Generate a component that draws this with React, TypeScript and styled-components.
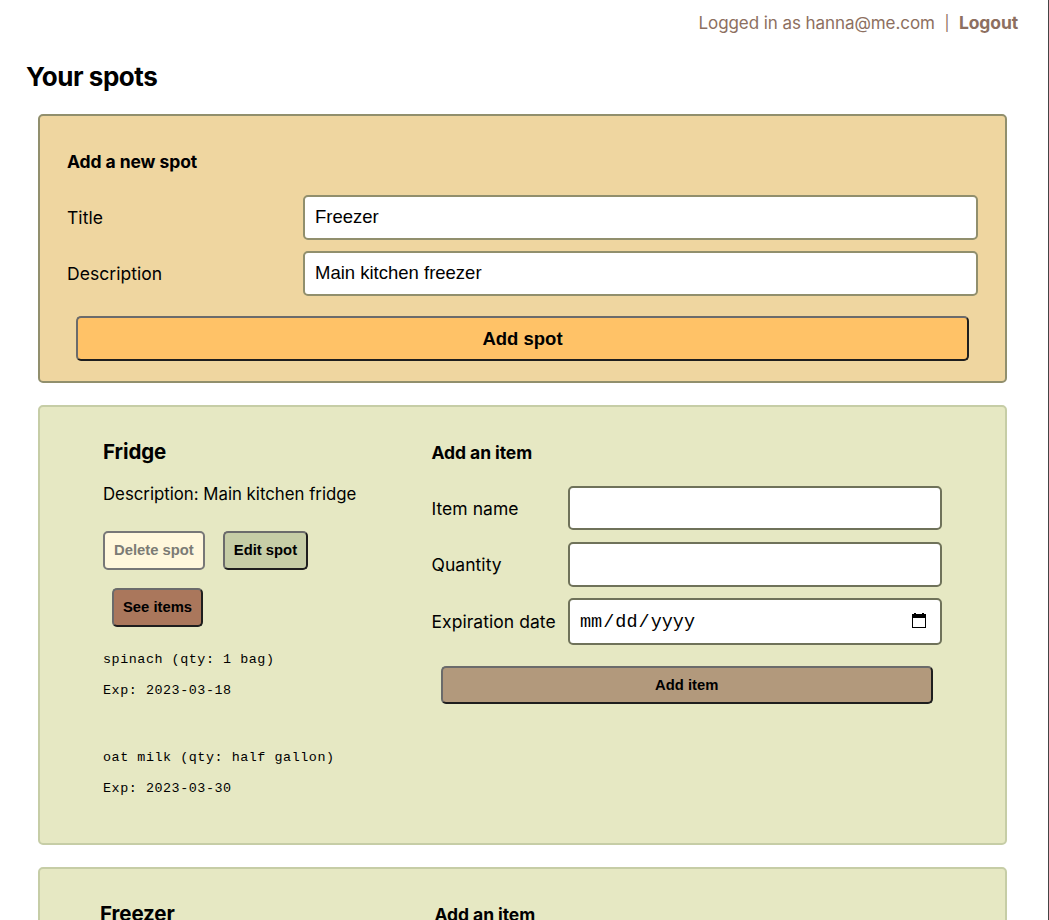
import React from "react";
import styled, { createGlobalStyle } from "styled-components";

const GlobalStyle = createGlobalStyle`
  * { box-sizing: border-box; }
  body {
    margin: 0;
    background: #fff;
    color: #000;
    font-family: Inter, "Liberation Sans", sans-serif;
    font-size: 17.5px;
  }
`;

const Page = styled.div`
  height: 920px;
  overflow: hidden;
  border-right: 1px solid #444;
  padding: 0 41px 0 38px;
`;

const TopBar = styled.header`
  display: flex;
  justify-content: flex-end;
  height: 46px;
  line-height: 46px;
  margin-right: -11px;
  color: #8d6f60;
  white-space: pre;
`;

const Account = styled.span`
  font-size: 17px;
  letter-spacing: -0.07px;
`;

const Divider = styled.span`
  width: 24px;
  text-align: center;
  font-size: 15px;
`;

const Logout = styled.a`
  font-weight: 700;
  letter-spacing: -0.1px;
`;

const PageTitle = styled.h1`
  margin: 0 0 0 -12px;
  height: 68px;
  line-height: 62px;
  font-size: 26px;
  font-weight: 700;
  letter-spacing: -0.45px;
`;

const NewSpotCard = styled.section`
  height: 269px;
  margin-bottom: 22px;
  padding: 31px 27px 0;
  background: #efd6a0;
  border: 2px solid #918f6d;
  border-radius: 5px;
`;

const SpotCard = styled.section<{ $inset: number; $formInset: number }>`
  display: flex;
  justify-content: space-between;
  height: 440px;
  margin-bottom: 22px;
  padding: 30px 63px 0 ${(p) => p.$inset}px;
  background: #e6e8c3;
  border: 2px solid #c6cda6;
  border-radius: 5px;
  --form-inset: ${(p) => p.$formInset}px;
`;

const FormTitle = styled.h3`
  margin: 0;
  height: 48px;
  line-height: 30px;
  font-size: 17.5px;
  font-weight: 700;
  letter-spacing: -0.08px;
`;

const SpotDetails = styled.div`
  width: 290px;
`;

const SpotTitle = styled.h2`
  margin: 0;
  height: 42px;
  line-height: 30px;
  font-size: 20.5px;
  font-weight: 700;
  letter-spacing: -0.1px;
`;

const Description = styled.p`
  margin: 0;
  height: 52px;
  line-height: 30px;
  font-size: 16.8px;
  white-space: nowrap;
`;

const SpotItemForm = styled.div`
  width: 510.5px;

  ${FormTitle} {
    height: 49px;
    line-height: 32px;
    padding-left: var(--form-inset);
  }
`;

const Field = styled.label<{ $labelWidth: number; $height: number; $gap: number }>`
  display: grid;
  grid-template-columns: ${(p) => p.$labelWidth}px 1fr;
  align-items: center;
  height: ${(p) => p.$height}px;
  margin-bottom: ${(p) => p.$gap}px;
  letter-spacing: 0.05px;
  white-space: nowrap;
`;

const TextInput = styled.input<{ $edge: string }>`
  width: 100%;
  height: 100%;
  padding: 0 10px 1px;
  background: #fff;
  border: 2px solid ${(p) => p.$edge};
  border-radius: 5px;
  color: #000;
  font: 18.5px "Liberation Sans", Arial, sans-serif;
  outline: none;
`;

const DateBox = styled.div`
  display: flex;
  align-items: center;
  justify-content: space-between;
  height: 100%;
  padding: 0 13px 0 10px;
  background: #fff;
  border: 2px solid #6f725a;
  border-radius: 5px;
  font: 18.5px "Liberation Mono", monospace;
  letter-spacing: 0;
`;

const DateParts = styled.span`
  display: flex;
  gap: 1px;
  padding-top: 2px;
`;

const Button = styled.button<{ $fill: string }>`
  height: 39px;
  padding: 0 9px 2px;
  background: ${(p) => p.$fill};
  border: 2px solid;
  border-color: #6b6b6b #1e1e1e #1e1e1e #6b6b6b;
  border-radius: 5px;
  color: #000;
  font: bold 14.8px "Liberation Sans", Arial, sans-serif;
  white-space: nowrap;

  &:disabled {
    border-color: #777;
    color: #7b7b75;
  }
`;

const WideButton = styled(Button)<{ $height: number; $size: number }>`
  display: block;
  width: calc(100% - 18px);
  height: ${(p) => p.$height}px;
  margin: 20px 9px 0;
  padding: 0;
  font-size: ${(p) => p.$size}px;
`;

const AddItemButton = styled(WideButton)`
  margin-top: 21px;
`;

const SpotActions = styled.div`
  display: flex;
  flex-wrap: wrap;
  gap: 18px;
  width: 230px;
  margin-bottom: 17px;
`;

const SeeItems = styled(Button)`
  margin-left: 9px;
`;

const Item = styled.div`
  height: 98px;
  font: 13.4px/31px "Liberation Mono", monospace;
  letter-spacing: 0.54px;
  white-space: nowrap;
`;

const ItemLine = styled.div`
  height: 31px;
`;

const CalendarIcon = () => (
  <svg width="16" height="17" viewBox="0 0 16 17">
    <path d="M3 0h2v1h6V0h2v1h2v14H1V1h2zM2 5v9h12V5z" fill="#000" fillRule="evenodd" />
  </svg>
);

type Food = { name: string; qty: string; exp: string };
type SpotProps = {
  title: string;
  description?: string;
  items?: Food[];
  inset?: number;
  formInset?: number;
};

function Spot({ title, description, items = [], inset = 63, formInset = 0 }: SpotProps) {
  return (
    <SpotCard $inset={inset} $formInset={formInset}>
      <SpotDetails>
        <SpotTitle>{title}</SpotTitle>
        {description && (
          <>
            <Description>Description: {description}</Description>
            <SpotActions>
              <Button $fill="#fff7dc" disabled>Delete spot</Button>
              <Button $fill="#c6cda6">Edit spot</Button>
              <SeeItems $fill="#aa775c">See items</SeeItems>
            </SpotActions>
          </>
        )}
        {items.map((item) => (
          <Item key={item.name}>
            <ItemLine>{item.name} (qty: {item.qty})</ItemLine>
            <ItemLine>Exp: {item.exp}</ItemLine>
          </Item>
        ))}
      </SpotDetails>
      <SpotItemForm>
        <FormTitle>Add an item</FormTitle>
        {description && (
          <>
            <Field $labelWidth={136.5} $height={44} $gap={12}>
              Item name
              <TextInput $edge="#6f725a" />
            </Field>
            <Field $labelWidth={136.5} $height={45} $gap={11}>
              Quantity
              <TextInput $edge="#6f725a" />
            </Field>
            <Field $labelWidth={136.5} $height={47} $gap={0}>
              Expiration date
              <DateBox>
                <DateParts>
                  <span>mm</span>
                  <span>/</span>
                  <span>dd</span>
                  <span>/</span>
                  <span>yyyy</span>
                </DateParts>
                <CalendarIcon />
              </DateBox>
            </Field>
            <AddItemButton $fill="#b2997c" $height={38} $size={14.8}>Add item</AddItemButton>
          </>
        )}
      </SpotItemForm>
    </SpotCard>
  );
}

const fridgeItems: Food[] = [
  { name: "spinach", qty: "1 bag", exp: "2023-03-18" },
  { name: "oat milk", qty: "half gallon", exp: "2023-03-30" },
];

export default function App() {
  return (
    <>
      <GlobalStyle />
      <Page>
        <TopBar>
          <Account>Logged in as hanna@me.com</Account>
          <Divider>|</Divider>
          <Logout>Logout</Logout>
        </TopBar>
        <PageTitle>Your spots</PageTitle>
        <NewSpotCard>
          <FormTitle>Add a new spot</FormTitle>
          <Field $labelWidth={236} $height={45} $gap={11}>
            Title
            <TextInput $edge="#918f6d" defaultValue="Freezer" />
          </Field>
          <Field $labelWidth={236} $height={45} $gap={0}>
            Description
            <TextInput $edge="#918f6d" defaultValue="Main kitchen freezer" />
          </Field>
          <WideButton $fill="#ffc267" $height={45} $size={18.5}>Add spot</WideButton>
        </NewSpotCard>
        <Spot title="Fridge" description="Main kitchen fridge" items={fridgeItems} />
        <Spot title="Freezer" inset={60} formInset={3} />
      </Page>
    </>
  );
}
